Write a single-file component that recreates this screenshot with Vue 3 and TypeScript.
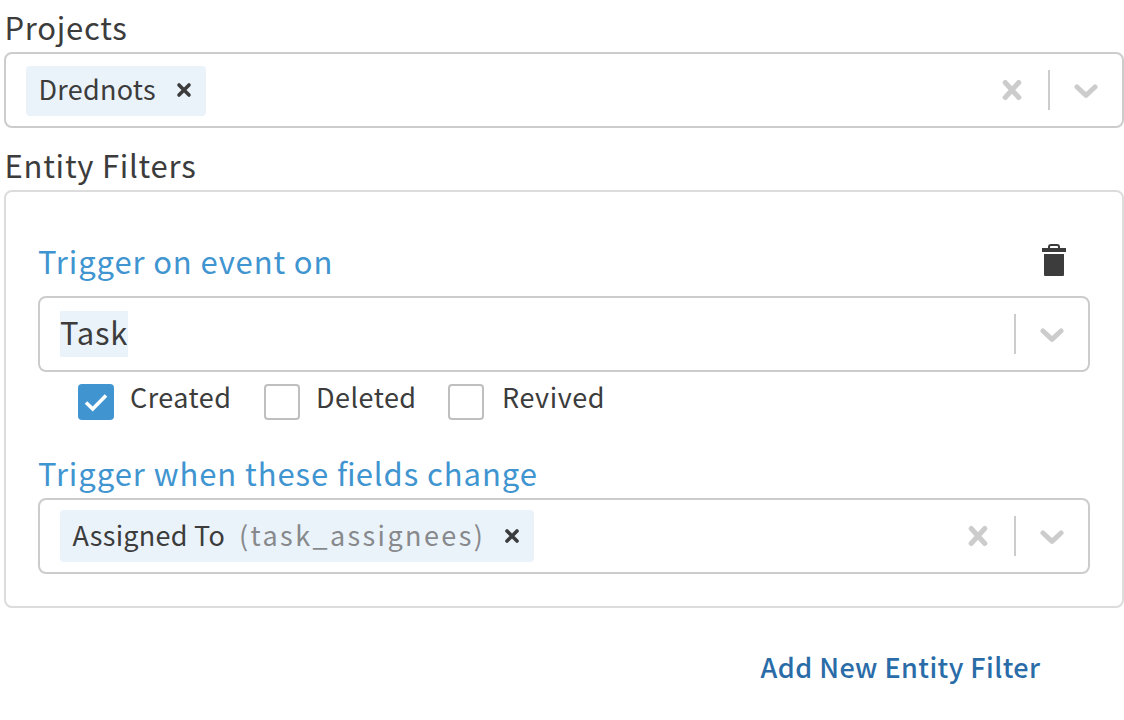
<script setup lang="ts">
import { ref } from 'vue'

interface EventOption {
  key: string
  label: string
}

const events: EventOption[] = [
  { key: 'created', label: 'Created' },
  { key: 'deleted', label: 'Deleted' },
  { key: 'revived', label: 'Revived' },
]
const selected = ref<string[]>(['created'])

function toggle(key: string): void {
  selected.value = selected.value.includes(key)
    ? selected.value.filter((k) => k !== key)
    : [...selected.value, key]
}
</script>

<template>
  <main class="form">
    <div class="label projects-label"><span>Projects</span></div>
    <div class="select">
      <div class="chip short">
        <span class="drednots">Drednots</span>
        <svg class="remove" viewBox="0 0 16 16"><path d="M3 3 13 13M13 3 3 13" /></svg>
      </div>
      <div class="indicators">
        <svg class="clear" viewBox="0 0 20 22"><path d="M3.2 3.5 16.8 18.5M16.8 3.5 3.2 18.5" /></svg>
        <i class="separator"></i>
        <svg class="chevron" viewBox="0 0 24 16"><path d="M3 5 12 13.3 21 5" /></svg>
      </div>
    </div>

    <div class="label entity-label"><span>Entity Filters</span></div>
    <section class="panel">
      <header class="panel-head">
        <span class="heading event-heading">Trigger on event on</span>
        <svg class="trash" viewBox="0 0 24 32">
          <path d="M0 4H6V3Q6 0 9 0H15Q18 0 18 3V4H24V8H0ZM8 4H16V3Q16 2 15 2H9Q8 2 8 3ZM2 10H22V31Q22 32 21 32H3Q2 32 2 31Z" fill-rule="evenodd" />
        </svg>
      </header>
      <div class="select">
        <span class="value">Task</span>
        <div class="indicators">
          <i class="separator"></i>
          <svg class="chevron" viewBox="0 0 24 16"><path d="M3 5 12 13.3 21 5" /></svg>
        </div>
      </div>
      <div class="checks">
        <div v-for="e in events" :key="e.key" class="check" :class="e.key" @click="toggle(e.key)">
          <span class="box" :class="{ on: selected.includes(e.key) }">
            <svg v-if="selected.includes(e.key)" viewBox="0 0 36 36"><path d="M8 18.5 14.7 25 28 11.5" /></svg>
          </span>
          <span class="check-label">{{ e.label }}</span>
        </div>
      </div>
      <div class="heading fields-heading"><span>Trigger when these <span class="lig">fi</span>elds change</span></div>
      <div class="select">
        <div class="chip tall">
          <span class="assigned">Assigned To</span>
          <span class="code">(task_assignees)</span>
          <svg class="remove" viewBox="0 0 16 16"><path d="M3 3 13 13M13 3 3 13" /></svg>
        </div>
        <div class="indicators">
          <svg class="clear" viewBox="0 0 20 22"><path d="M3.2 3.5 16.8 18.5M16.8 3.5 3.2 18.5" /></svg>
          <i class="separator"></i>
          <svg class="chevron" viewBox="0 0 24 16"><path d="M3 5 12 13.3 21 5" /></svg>
        </div>
      </div>
    </section>
    <div class="actions"><span class="add">Add New Entity Filter</span></div>
  </main>
</template>

<style>
body {
  background: #fff;
}
</style>

<style scoped>
.form {
  box-sizing: border-box;
  width: 1124px;
  height: 720px;
  padding: 4px 0 0 4px;
  overflow: hidden;
  color: #3c3c3c;
  font-family: "Noto Sans CJK JP", "Noto Sans", sans-serif;
  font-size: 27px;
  white-space: nowrap;
}
.label,
.heading {
  font-size: 31px;
  line-height: 46px;
  letter-spacing: 0.88px;
}
.label {
  height: 48px;
  padding-left: 0.5px;
  letter-spacing: 0.75px;
}
.entity-label {
  margin-top: 14px;
}
.select {
  box-sizing: border-box;
  display: flex;
  align-items: center;
  height: 76px;
  padding-left: 20px;
  border: 2px solid #ccc;
  border-radius: 8px;
}
.chip {
  display: flex;
  align-items: center;
  box-sizing: border-box;
  width: 180px;
  height: 50px;
  padding: 0 14px 0 12.5px;
  border-radius: 4px;
  background: #ebf3fa;
  line-height: 50px;
  letter-spacing: 0.25px;
}
.chip.short {
  margin-top: 2px;
}
.chip.short .remove {
  margin-top: -2px;
}
.drednots {
  margin-top: -4px;
}
.chip.tall {
  width: 474px;
  height: 52px;
  letter-spacing: 0.25px;
}
.chip.tall span {
  margin-top: -3px;
}
.code {
  margin-left: 14px;
  color: #87898c;
  letter-spacing: 2.4px;
}
svg {
  display: block;
  flex: none;
}
.remove {
  width: 16px;
  height: 16px;
  margin-left: auto;
}
.remove path {
  fill: none;
  stroke: #3c3c3c;
  stroke-width: 3.6;
  stroke-linecap: round;
}
.indicators {
  display: flex;
  align-items: center;
  margin-left: auto;
  padding-right: 24px;
}
.clear {
  width: 20px;
  height: 22px;
  margin-right: 26px;
}
.separator {
  width: 2px;
  height: 40px;
  margin-right: 24px;
  background: #ccc;
}
.chevron {
  width: 24px;
  height: 16px;
}
.clear path,
.chevron path {
  fill: none;
  stroke: #ccc;
  stroke-width: 5;
  stroke-linecap: round;
  stroke-linejoin: round;
}
.panel {
  box-sizing: border-box;
  height: 418px;
  padding: 46px 32px 0;
  border: 2px solid #dcdcdc;
  border-radius: 8px;
}
.panel-head {
  display: flex;
  justify-content: space-between;
  height: 58px;
}
.heading {
  color: #4095d1;
}
.lig {
  letter-spacing: 0;
}
.fields-heading {
  height: 48px;
  margin-top: 30px;
  letter-spacing: 0.94px;
}
.trash {
  width: 24px;
  height: 32px;
  margin: 6px 24px 0 0;
  fill: #3c3c3c;
}
.value {
  height: 46px;
  background: #ebf3fa;
  font-size: 31px;
  line-height: 41px;
  letter-spacing: 0.75px;
}
.checks {
  display: flex;
  padding: 12px 0 0 40px;
}
.check {
  display: flex;
  width: 186px;
  height: 36px;
}
.check.deleted {
  width: 184px;
}
.box {
  box-sizing: border-box;
  width: 36px;
  height: 36px;
  border: 2px solid #bfbfbf;
  border-radius: 4px;
}
.box.on {
  border: 0;
  background: #4095d1;
}
.box path {
  fill: none;
  stroke: #fff;
  stroke-width: 3.6;
}
.check-label {
  margin-left: 16px;
  line-height: 25px;
  letter-spacing: 0.45px;
}
.revived .check-label {
  margin-left: 18px;
  letter-spacing: 0.55px;
}
.actions {
  display: flex;
  justify-content: flex-end;
  padding: 36px 83.5px 0 0;
}
.add {
  color: #2a6ca8;
  font-weight: 500;
  line-height: 45px;
  letter-spacing: 0.42px;
}
</style>
